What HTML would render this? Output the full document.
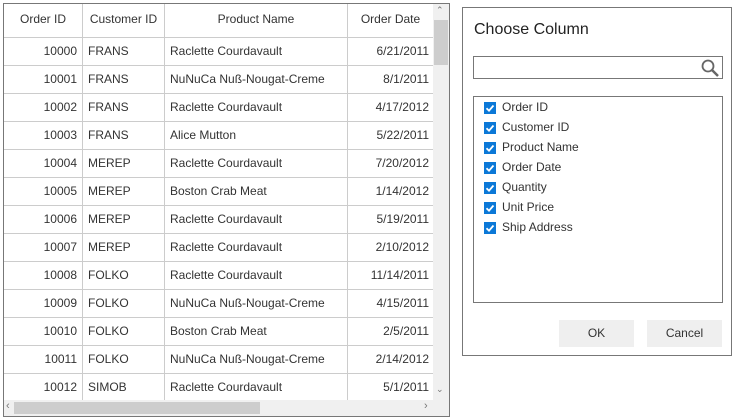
<!DOCTYPE html><html><head><style>
body{margin:0;width:744px;height:418px;background:#fff;font-family:"Liberation Sans",sans-serif;font-size:12px;color:#333;position:relative;overflow:hidden}
.a{position:absolute}
.grid{left:3px;top:3px;width:445px;height:412px;border:1px solid #777;}
.c{position:absolute;white-space:nowrap;line-height:26px}
.cb{position:absolute;width:12px;height:12px;background:#0b78d7;left:10px}
.cb svg{position:absolute;left:0;top:0}
.it{position:absolute;left:28px;font-size:12px;color:#333}
</style></head><body>
<div class="a grid"></div>
<div id="g"></div>
<div class="a" style="left:433px;top:4px;width:16px;height:396px;background:#f0f0f0"></div>
<div class="a" style="left:434px;top:20px;width:14px;height:45px;background:#cdcdcd"></div>
<div class="a" style="left:436px;top:5px;font-size:9px;color:#777">&#8963;</div>
<div class="a" style="left:436px;top:384px;font-size:9px;color:#777">&#8964;</div>
<div class="a" style="left:4px;top:400px;width:445px;height:16px;background:#f0f0f0"></div>
<div class="a" style="left:14px;top:402px;width:246px;height:12px;background:#cdcdcd"></div>
<div class="a" style="left:6px;top:400px;font-size:11px;color:#777">&#8249;</div>
<div class="a" style="left:424px;top:400px;font-size:11px;color:#777">&#8250;</div>
<div class="a" style="left:462px;top:7px;width:268px;height:347px;border:1px solid #777"></div>
<div class="a" style="left:474px;top:21px;font-size:16px;color:#222">Choose Column</div>
<div class="a" style="left:473px;top:56px;width:248px;height:21px;border:1px solid #777"></div>
<svg class="a" style="left:700px;top:59px" width="20" height="18"><circle cx="8" cy="7" r="5.5" fill="none" stroke="#666" stroke-width="1.8"/><line x1="12" y1="11" x2="18" y2="17" stroke="#666" stroke-width="2.5"/></svg>
<div class="a" style="left:473px;top:96px;width:248px;height:205px;border:1px solid #777">
<div id="l"></div></div>
<div class="a" style="left:559px;top:320px;width:75px;height:27px;background:#efefef;text-align:center;line-height:27px">OK</div>
<div class="a" style="left:647px;top:320px;width:75px;height:27px;background:#efefef;text-align:center;line-height:27px">Cancel</div>
<script>
var rows=[["10000","FRANS","Raclette Courdavault","6/21/2011"],["10001","FRANS","NuNuCa Nuß-Nougat-Creme","8/1/2011"],["10002","FRANS","Raclette Courdavault","4/17/2012"],["10003","FRANS","Alice Mutton","5/22/2011"],["10004","MEREP","Raclette Courdavault","7/20/2012"],["10005","MEREP","Boston Crab Meat","1/14/2012"],["10006","MEREP","Raclette Courdavault","5/19/2011"],["10007","MEREP","Raclette Courdavault","2/10/2012"],["10008","FOLKO","Raclette Courdavault","11/14/2011"],["10009","FOLKO","NuNuCa Nuß-Nougat-Creme","4/15/2011"],["10010","FOLKO","Boston Crab Meat","2/5/2011"],["10011","FOLKO","NuNuCa Nuß-Nougat-Creme","2/14/2012"],["10012","SIMOB","Raclette Courdavault","5/1/2011"]];
var h='';
h+='<div class="c" style="left:4px;top:4px;width:78px;text-align:center;line-height:31px">Order ID</div>';
h+='<div class="c" style="left:83px;top:4px;width:81px;text-align:center;line-height:31px">Customer ID</div>';
h+='<div class="c" style="left:165px;top:4px;width:182px;text-align:center;line-height:31px">Product Name</div>';
h+='<div class="c" style="left:348px;top:4px;width:85px;text-align:center;line-height:31px">Order Date</div>';
[82,164,347].forEach(function(x){h+='<div class="a" style="left:'+x+'px;top:4px;width:1px;height:396px;background:#ccc"></div>'});
h+='<div class="a" style="left:4px;top:37px;width:429px;height:1px;background:#ccc"></div>';
rows.forEach(function(r,i){var t=38+i*28;
h+='<div class="c" style="left:4px;top:'+t+'px;width:73px;text-align:right">'+r[0]+'</div>';
h+='<div class="c" style="left:88px;top:'+t+'px">'+r[1]+'</div>';
h+='<div class="c" style="left:170px;top:'+t+'px">'+r[2]+'</div>';
h+='<div class="c" style="left:348px;top:'+t+'px;width:81px;text-align:right">'+r[3]+'</div>';
if(i<12)h+='<div class="a" style="left:4px;top:'+(t+27)+'px;width:429px;height:1px;background:#ccc"></div>';});
document.getElementById('g').innerHTML=h;
var it=["Order ID","Customer ID","Product Name","Order Date","Quantity","Unit Price","Ship Address"],l='';
it.forEach(function(s,i){var t=3+i*20;
l+='<div class="cb" style="top:'+(t+2)+'px"><svg width="12" height="12"><path d="M2.5 6.2 L5 8.7 L9.5 3.5" fill="none" stroke="#fff" stroke-width="1.8"/></svg></div><div class="it" style="top:'+t+'px">'+s+'</div>';});
document.getElementById('l').innerHTML=l;
</script></body></html>
